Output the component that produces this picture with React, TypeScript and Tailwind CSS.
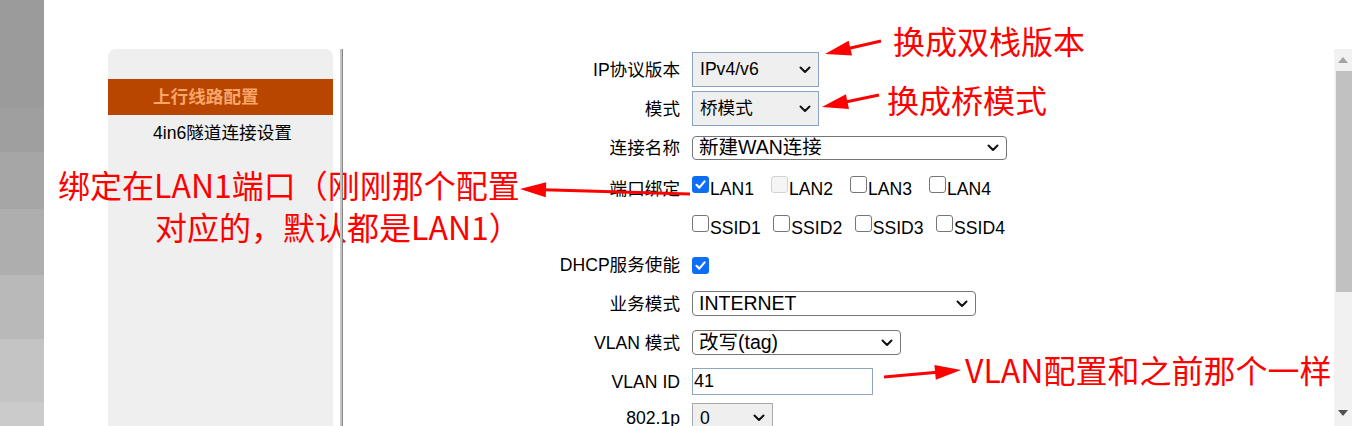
import type { ReactNode } from "react";

const font = "font-['Liberation_Sans','Noto_Sans_CJK_SC',sans-serif]";

const Chevron = () => (
	<svg width="12" height="8" viewBox="0 0 12 8" className="shrink-0">
		<path d="M1.5 1.5 L6 6 L10.5 1.5" fill="none" stroke="#111" strokeWidth="2" strokeLinecap="round" strokeLinejoin="round" />
	</svg>
);

type BoxState = "on" | "off" | "disabled";

const Box = ({ state }: { state: BoxState }) => {
	if (state === "on")
		return (
			<span className="flex h-[17px] w-[17px] shrink-0 items-center justify-center rounded-[3px] bg-[#0b6ef5]">
				<svg width="13" height="13" viewBox="0 0 13 13">
					<path d="M2.5 6.8 L5.3 9.6 L10.6 3.4" fill="none" stroke="#fff" strokeWidth="2.2" strokeLinecap="round" strokeLinejoin="round" />
				</svg>
			</span>
		);
	if (state === "disabled")
		return <span className="h-[17px] w-[17px] shrink-0 rounded-[3px] border border-[#d2d2d2] bg-[#f5f5f5]" />;
	return <span className="h-[17px] w-[17px] shrink-0 rounded-[3px] border border-[#767676] bg-white" />;
};

const Option = ({ text, state = "off" }: { text: string; state?: BoxState }) => (
	<div className="flex items-start">
		<Box state={state} />
		<span className="ml-[1px] mt-[3px] leading-[20px]">{text}</span>
	</div>
);

type RowTypes = {
	label: string;
	className: string;
	children: ReactNode;
};

const Row = ({ label, className, children }: RowTypes) => (
	<div className={`flex ${className}`}>
		<div className="w-[337px] shrink-0 text-right leading-[20px]">{label}</div>
		<div className="ml-[12px] flex h-full">{children}</div>
	</div>
);

const Arrow = ({ x1, y1, x2, y2 }: { x1: number; y1: number; x2: number; y2: number }) => {
	const dx = x2 - x1;
	const dy = y2 - y1;
	const len = Math.hypot(dx, dy);
	const ux = dx / len;
	const uy = dy / len;
	const hl = 26;
	const hw = 7.5;
	const bx = x2 - ux * hl;
	const by = y2 - uy * hl;
	const pts = `${x2},${y2} ${bx - uy * hw},${by + ux * hw} ${bx + uy * hw},${by - ux * hw}`;
	return (
		<g fill="#ff0000" stroke="#ff0000">
			<line x1={x1} y1={y1} x2={bx + ux * 2} y2={by + uy * 2} strokeWidth="3" />
			<polygon points={pts} strokeWidth="0" />
		</g>
	);
};

export default function App() {
	return (
		<div className={`relative flex h-[426px] w-[1352px] overflow-hidden bg-white text-[17.6px] text-black ${font}`}>
			{/* left gray strip */}
			<div className="flex w-[44px] shrink-0 flex-col">
				<div className="h-[108px] bg-[#9b9b9b]" />
				<div className="h-[44px] bg-[#9f9f9f]" />
				<div className="h-[57px] bg-[#a6a6a6]" />
				<div className="h-[66px] bg-[#aeaeae]" />
				<div className="h-[64px] bg-[#b9b9b9]" />
				<div className="h-[63px] bg-[#c4c4c4]" />
				<div className="flex-1 bg-[#cbcbcb]" />
			</div>

			{/* side menu */}
			<div className="ml-[64px] mt-[49px] w-[225px] shrink-0 rounded-t-[8px] bg-[#efefef] pt-[30px]">
				<div className="flex h-[36px] items-center bg-[#b84600] pl-[45px] font-bold text-[#f9a468]">上行线路配置</div>
				<div className="flex h-[36px] items-center pl-[45px]">4in6隧道连接设置</div>
			</div>

			<div className="relative z-10 ml-[7px] mt-[49px] w-[3px] shrink-0 border-r border-[#858585] bg-[#c4c4c4]" />

			{/* form */}
			<div className="flex-1 pt-[52px]">
				<Row label="IP协议版本" className="h-[35px] items-center">
					<div className="flex w-[127px] items-center justify-between border border-[#8aa3c2] bg-[#efefef] px-[7px]">
						<span>IPv4/v6</span>
						<Chevron />
					</div>
				</Row>
				<Row label="模式" className="mt-[4px] h-[35px] items-center">
					<div className="flex w-[127px] items-center justify-between border border-[#8aa3c2] bg-[#efefef] px-[7px]">
						<span>桥模式</span>
						<Chevron />
					</div>
				</Row>
				<Row label="连接名称" className="mt-[10px] h-[24px] items-center">
					<div className="flex w-[315px] items-center justify-between rounded-[4px] border border-[#767676] bg-white pl-[6px] pr-[7px] text-[19.5px]">
						<span>新建WAN连接</span>
						<Chevron />
					</div>
				</Row>
				<div className="mt-[16px] flex items-start">
					<div className="mt-[3px] w-[337px] shrink-0 text-right leading-[20px]">端口绑定</div>
					<div className="ml-[12px] flex gap-[17px]">
						<Option text="LAN1" state="on" />
						<Option text="LAN2" state="disabled" />
						<Option text="LAN3" />
						<Option text="LAN4" />
					</div>
				</div>
				<div className="mt-[16px] flex items-start">
					<div className="w-[337px] shrink-0" />
					<div className="ml-[12px] flex gap-[12.5px]">
						<Option text="SSID1" />
						<Option text="SSID2" />
						<Option text="SSID3" />
						<Option text="SSID4" />
					</div>
				</div>
				<div className="mt-[17px] flex items-start">
					<div className="w-[337px] shrink-0 text-right leading-[20px]">DHCP服务使能</div>
					<div className="ml-[12px] mt-[2px]">
						<Box state="on" />
					</div>
				</div>
				<Row label="业务模式" className="mt-[16px] h-[25px] items-center">
					<div className="flex w-[284px] items-center justify-between rounded-[4px] border border-[#767676] bg-white pl-[6px] pr-[7px] text-[19.5px]">
						<span>INTERNET</span>
						<Chevron />
					</div>
				</Row>
				<Row label="VLAN 模式" className="mt-[14px] h-[25px] items-center">
					<div className="flex w-[209px] items-center justify-between rounded-[4px] border border-[#767676] bg-white pl-[6px] pr-[7px] text-[19.5px]">
						<span>改写(tag)</span>
						<Chevron />
					</div>
				</Row>
				<Row label="VLAN ID" className="mt-[13px] h-[27px] items-center">
					<input
						readOnly
						value="41"
						className="w-[181px] border border-[#8ea6c4] bg-white pl-[1px] text-[18px] outline-none"
					/>
				</Row>
				<Row label="802.1p" className="mt-[8px] h-[30px] items-center">
					<div className="flex w-[81px] items-center justify-between border border-[#a9a9a9] bg-[#efefef] px-[7px]">
						<span>0</span>
						<Chevron />
					</div>
				</Row>
			</div>

			{/* scrollbar */}
			<div className="mt-[49px] flex w-[18px] shrink-0 flex-col bg-[#f1f1f1]">
				<div className="flex h-[22px] items-center justify-center">
					<svg width="10" height="6" viewBox="0 0 10 6">
						<path d="M0 6 L5 0 L10 6 Z" fill="#a3a3a3" />
					</svg>
				</div>
				<div className="ml-[2px] h-[221px] bg-[#c1c1c1]" />
				<div className="flex-1" />
				<div className="flex h-[27px] items-center justify-center">
					<svg width="10" height="6" viewBox="0 0 10 6">
						<path d="M0 0 L10 0 L5 6 Z" fill="#505050" />
					</svg>
				</div>
			</div>

			{/* annotations */}
			<div className="pointer-events-none absolute inset-0 font-['Noto_Sans_CJK_SC',sans-serif] text-[32px] leading-[32px] text-[#ff0000]">
				<div className="absolute left-[893px] top-[24px] whitespace-nowrap">换成双栈版本</div>
				<div className="absolute left-[887px] top-[83px] whitespace-nowrap">换成桥模式</div>
				<div className="absolute left-[58px] top-[168px] whitespace-nowrap">绑定在LAN1端口（刚刚那个配置</div>
				<div className="absolute left-[155px] top-[210px] whitespace-nowrap">对应的，默认都是LAN1）</div>
				<div className="absolute left-[965px] top-[353px] whitespace-nowrap">VLAN配置和之前那个一样</div>
				<svg width="1352" height="426" className="absolute inset-0">
					<Arrow x1={881} y1={41} x2={825} y2={54} />
					<Arrow x1={879} y1={95} x2={822} y2={107} />
					<Arrow x1={690} y1={194} x2={520} y2={189} />
					<Arrow x1={884} y1={377} x2={961} y2={370} />
				</svg>
			</div>
		</div>
	);
}
